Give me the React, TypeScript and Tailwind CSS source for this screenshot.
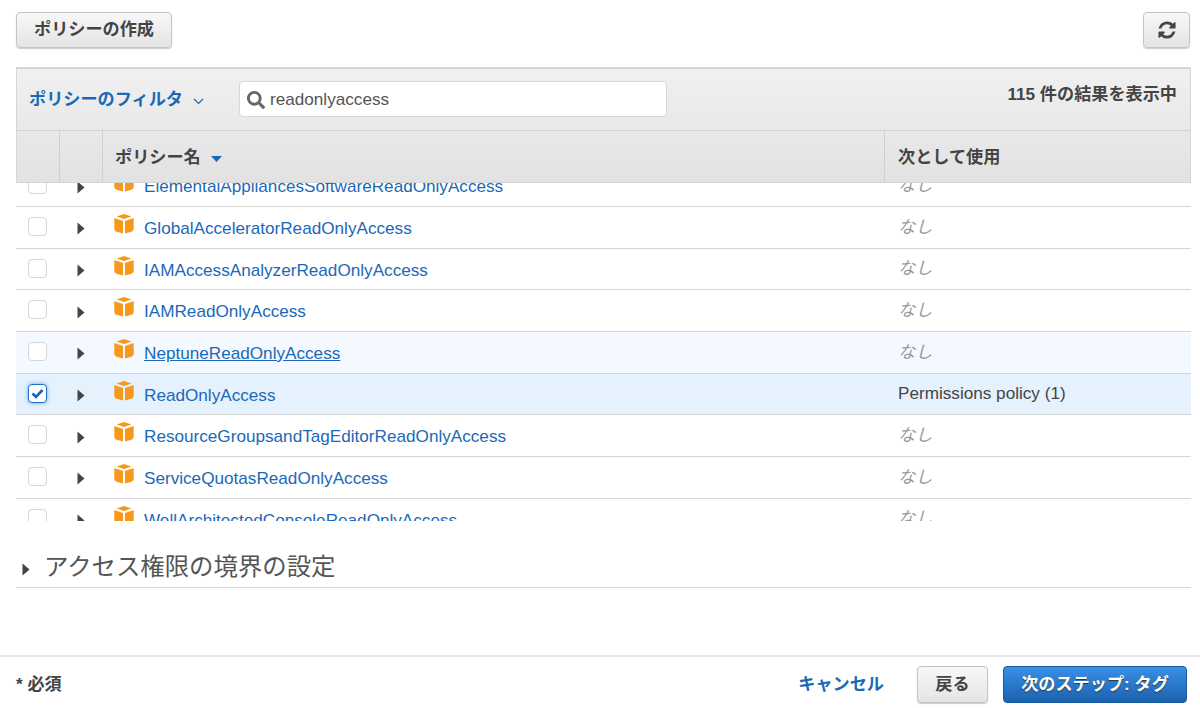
import React from 'react';
import { FaSearch } from 'react-icons/fa';

const POLICIES = [
  { name: 'ElementalAppliancesSoftwareReadOnlyAccess', usage: 'なし' },
  { name: 'GlobalAcceleratorReadOnlyAccess', usage: 'なし' },
  { name: 'IAMAccessAnalyzerReadOnlyAccess', usage: 'なし' },
  { name: 'IAMReadOnlyAccess', usage: 'なし' },
  { name: 'NeptuneReadOnlyAccess', usage: 'なし', hover: true },
  { name: 'ReadOnlyAccess', usage: 'Permissions policy (1)', checked: true },
  { name: 'ResourceGroupsandTagEditorReadOnlyAccess', usage: 'なし' },
  { name: 'ServiceQuotasReadOnlyAccess', usage: 'なし' },
  { name: 'WellArchitectedConsoleReadOnlyAccess', usage: 'なし' },
];

const Caret = () => (
  <svg width="8" height="13" viewBox="0 0 8 13">
    <path d="M0.5 0.5 L7.5 6.5 L0.5 12.5 Z" fill="#444" />
  </svg>
);

const RefreshIcon = () => (
  <svg width="20" height="20" viewBox="0 0 1792 1792">
    <path
      fill="#444"
      d="M1639 1056q0 5-1 7-64 268-268 434.5t-478 166.5q-146 0-282.5-55t-243.5-157l-129 129q-19 19-45 19t-45-19-19-45v-448q0-26 19-45t45-19h448q26 0 45 19t19 45-19 45l-137 137q71 66 161 102t187 36q134 0 250-65t186-179q11-17 53-117 8-23 30-23h192q13 0 22.5 9.5t9.5 22.5zm25-800v448q0 26-19 45t-45 19h-448q-26 0-45-19t-19-45 19-45l138-138q-148-137-349-137-134 0-250 65t-186 179q-11 17-53 117-8 23-30 23h-199q-13 0-22.5-9.5t-9.5-22.5v-7q65-268 270-434.5t480-166.5q146 0 284 55.5t245 156.5l130-129q19-19 45-19t45 19 19 45z"
    />
  </svg>
);

const BoxIcon = () => (
  <svg width="20" height="20" viewBox="0 0 20 20">
    <path d="M10 0 L17.5 2.6 L10 5 L2.5 2.6 Z" fill="#f7981d" />
    <path d="M0.3 4 L9 7 L9 19.6 L2.6 17.8 Q0.3 17.2 0.3 15 Z" fill="#f7981d" />
    <path d="M19.7 4 L11 7 L11 19.6 L17.4 17.8 Q19.7 17.2 19.7 15 Z" fill="#f7981d" />
  </svg>
);

const Checkbox = ({ checked }: { checked?: boolean }) =>
  checked ? (
    <span className="w-[19px] h-[19px] rounded-[4px] bg-white border border-[#1e73c8] shadow-[0_0_4px_#6aa8ea] flex items-center justify-center">
      <svg width="13" height="11" viewBox="0 0 13 11">
        <path d="M1.5 5.5 L5 9 L11.5 2" fill="none" stroke="#1466b8" strokeWidth="2.6" />
      </svg>
    </span>
  ) : (
    <span className="w-[19px] h-[19px] rounded-[4px] bg-white border border-[#d5d5d5]" />
  );

const App = () => {
  return (
    <div
      className="w-[1200px] h-[708px] bg-white flex flex-col overflow-hidden text-[#444]"
      style={{ fontFamily: '"Liberation Sans", "Noto Sans CJK JP", sans-serif' }}
    >
      <div className="flex-grow pl-[16px] pt-[12px] pr-[9px]">
        <div className="flex justify-between items-start h-[36px]">
          <button className="w-[156px] h-[36px] rounded-[4px] border border-[#c4c4c4] bg-gradient-to-b from-[#f8f8f8] to-[#e4e4e4] shadow-[0_1px_1px_#ccc] text-[17.15px] font-bold text-[#444]">
            ポリシーの作成
          </button>
          <button className="w-[47px] h-[36px] mr-px rounded-[4px] border border-[#c4c4c4] bg-gradient-to-b from-[#f8f8f8] to-[#e4e4e4] shadow-[0_1px_1px_#ccc] flex items-center justify-center">
            <RefreshIcon />
          </button>
        </div>

        {/* Table header */}
        <div className="mt-[19px] border border-[#d5d5d5] border-t-2 bg-gradient-to-b from-[#f0f0f0] to-[#e2e2e2]">
          <div className="h-[62px] flex items-start border-b border-[#d0d0d0]">
            <div className="flex items-center h-full ml-[12px] w-[210px] text-[#1a68b8] font-bold text-[17.15px]">
              ポリシーのフィルタ
              <svg className="ml-[10px] mt-[3px]" width="11" height="7" viewBox="0 0 11 7">
                <path d="M1 1 L5.5 5.5 L10 1" fill="none" stroke="#1a68b8" strokeWidth="1.2" />
              </svg>
            </div>
            <div className="mt-[11px] w-[428px] h-[36px] translate-y-px bg-white rounded-[4px] border border-[#d8d8d8] flex items-center pl-[7px] pt-px text-[17.15px] text-[#555]">
              <FaSearch size={18} className="text-[#666] mr-[5px]" />
              readonlyaccess
            </div>
            <div className="ml-auto mt-[13px] mr-[13px] text-[17.15px] font-bold text-[#444]">115 件の結果を表示中</div>
          </div>
          <div className="h-[51px] flex text-[17.15px] font-bold text-[#444]">
            <div className="w-[43px] border-r border-[#d0d0d0]" />
            <div className="w-[43px] border-r border-[#d0d0d0]" />
            <div className="w-[782px] border-r border-[#d0d0d0] flex items-center pl-[12px] pt-[2px]">
              ポリシー名
              <svg className="ml-[10px] mt-[2px]" width="11" height="6" viewBox="0 0 11 6">
                <path d="M0 0 L11 0 L5.5 6 Z" fill="#1a68b8" />
              </svg>
            </div>
            <div className="flex-grow flex items-center pl-[13px] pt-[2px]">次として使用</div>
          </div>
        </div>

        {/* Scrolled rows */}
        <div className="h-[338px] overflow-hidden">
          <div className="-mt-[17.5px]">
            {POLICIES.map((p) => (
              <div
                key={p.name}
                className={`h-[41.67px] flex items-center border-b border-[#d5d5d5] ${
                  p.checked ? 'bg-[#e5f1fc]' : p.hover ? 'bg-[#f3f9fe]' : 'bg-white'
                }`}
              >
                <div className="w-[44px] flex justify-center pr-[1px] -mt-[2px]">
                  <Checkbox checked={p.checked} />
                </div>
                <div className="w-[42px] flex justify-center mt-[3px]">
                  <Caret />
                </div>
                <div className="w-[783px] flex items-center pl-[12px]">
                  <span className="-mt-[7px]">
                    <BoxIcon />
                  </span>
                  <span className={`ml-[10px] mt-[3px] text-[17.15px] text-[#1a68b8] ${p.hover ? 'underline' : ''}`}>{p.name}</span>
                </div>
                <div className={`pl-[13px] text-[17.15px] ${p.usage === 'なし' ? 'italic text-[#999]' : 'text-[#444]'}`}>
                  {p.usage}
                </div>
              </div>
            ))}
          </div>
        </div>

        {/* Permissions boundary */}
        <div className="mt-[28px] h-[39px] border-b border-[#d5d5d5] flex items-center">
          <span className="ml-[6px] mt-[3px]">
            <Caret />
          </span>
          <span className="ml-[14px] text-[24.4px] text-[#555] leading-none -mt-[1px]">アクセス権限の境界の設定</span>
        </div>
      </div>

      {/* Footer */}
      <div className="h-[53px] border-t-2 border-[#e5e5e5] flex items-center pl-[16px] pr-[13px]">
        <span className="mt-[5px] text-[17.15px] font-bold text-[#444]">* 必須</span>
        <a className="ml-auto mt-[5px] text-[17.15px] font-bold text-[#1a68b8]">キャンセル</a>
        <button className="ml-[33px] mt-[3px] w-[71px] h-[37px] pt-px rounded-[4px] border border-[#c4c4c4] bg-gradient-to-b from-[#f8f8f8] to-[#e4e4e4] shadow-[0_1px_1px_#ccc] text-[17.15px] font-bold text-[#444]">
          戻る
        </button>
        <button className="ml-[15px] mt-[3px] w-[184px] h-[37px] pt-px rounded-[4px] border border-[#155a9e] bg-gradient-to-b from-[#3a90e8] to-[#1a62ae] text-[17.15px] font-bold text-white [text-shadow:0_1px_1px_#333]">
          次のステップ: タグ
        </button>
      </div>
    </div>
  );
};

export default App;
